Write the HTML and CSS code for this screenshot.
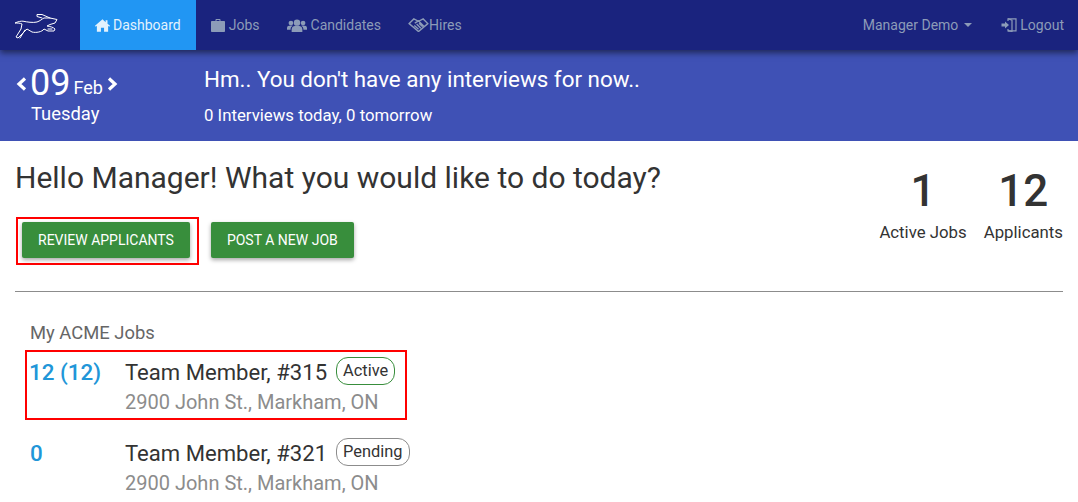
FILE: index.html
```html
<!DOCTYPE html>
<html lang="en">
<head>
<meta charset="utf-8">
<title>Dashboard</title>
<link rel="stylesheet" href="styles.css">
</head>
<body>
<nav class="nav">
  <a class="brand" href="#">
    <svg class="logo" viewBox="0 0 44 26" width="44" height="26" fill="none" stroke="#fff" stroke-width="1" stroke-linejoin="round" stroke-linecap="round">
      <path d="M0 10C3 8.500 6 8 8 8.200C12 9 18 10 22 9C25 8 27 6 29 5L35 5L42 6.500L40 10L35 11.500L32 13C35 13.500 38 14 40 16L39 18L33 18L29 16C27 19 21 20 17 19L12 16L9 19L3 25L1 24L6 16L7 11C5 10 3 10 0 10Z"/>
      <path d="M10 17L5 25"/>
      <path d="M35 5L27 1.500L22 1.500L22 3.500L27 5"/>
      <path d="M33 16L37 16"/>
    </svg>
  </a>
  <ul class="menu">
    <li><a class="item active" href="#">
      <svg class="ico ico-home" viewBox="0 0 24 20" width="15" height="13"><path d="M12 0L0 10.500l1.200 1.300L3 10.300V20h6.500v-6.500h5V20H21v-9.700l1.800 1.500 1.200-1.300-4-3.500V1.500h-3v3.200z" fill="currentColor"/></svg>Dashboard</a></li>
    <li><a class="item" href="#">
      <svg class="ico ico-gap" viewBox="0 0 28 26" width="14" height="13"><path d="M9 4V1.500C9 .7 9.700 0 10.500 0h7C18.300 0 19 .7 19 1.500V4h7c1.100 0 2 .9 2 2v18c0 1.100-.9 2-2 2H2c-1.100 0-2-.9-2-2V6c0-1.100.9-2 2-2zm2 0h6V2h-6z" fill="currentColor"/></svg>Jobs</a></li>
    <li><a class="item" href="#">
      <svg class="ico ico-users" viewBox="0 0 28 18" width="20" height="13"><g fill="currentColor"><circle cx="14" cy="5" r="4.500"/><path d="M6.500 18v-3.500C6.500 11 9 9.500 14 9.500s7.500 1.500 7.500 5V18z"/><circle cx="5.500" cy="5.500" r="3.300"/><path d="M0 15v-2.500C0 10 2 9 5.500 9c1 0 1.800.1 2.500.3-2 1-3 2.800-3 5.200v.5z"/><circle cx="22.500" cy="5.500" r="3.300"/><path d="M28 15v-2.500C28 10 26 9 22.500 9c-1 0-1.800.1-2.500.3 2 1 3 2.800 3 5.200v.5z"/></g></svg>Candidates</a></li>
    <li><a class="item" href="#">
      <svg class="ico ico-hands" viewBox="0 0 22 15" width="21" height="14" fill="none" stroke="currentColor" stroke-width="1.500"><path d="M1 6L6 1l5 2.500L16 1l5 5-10 8.500z"/><path d="M7 5.500l4-2.500 6 6M6.500 8l4.500 4M9 6.500l4.500 4.500M11.500 5.500l4 4"/></svg>Hires</a></li>
  </ul>
  <ul class="menu menu-right">
    <li><a class="item" href="#">Manager Demo<span class="caret"></span></a></li>
    <li><a class="item item-logout" href="#">
      <svg class="ico ico-logout" viewBox="0 0 16 14" width="16" height="14" fill="none" stroke="currentColor" stroke-width="1.200"><path d="M7 3V.8h8v12H7V11"/><path d="M7 .8l4 1.400v11.200l-4-.6" /><path d="M.5 5.500h3.500V3.500L8 7l-4 3.500v-2H.5z" fill="currentColor" stroke="none"/></svg>Logout</a></li>
  </ul>
</nav>

<header class="banner">
  <div class="date">
    <div class="date-row">
      <svg class="chev" viewBox="0 0 11 14" width="11" height="14"><path d="M9 1.500L3 7l6 5.500" fill="none" stroke="#fff" stroke-width="3.200"/></svg>
      <span class="day">09</span><span class="month">Feb</span>
      <svg class="chev" viewBox="0 0 11 14" width="11" height="14"><path d="M2 1.500L8 7l-6 5.500" fill="none" stroke="#fff" stroke-width="3.200"/></svg>
    </div>
    <div class="weekday">Tuesday</div>
  </div>
  <div class="summary">
    <h2 class="summary-title">Hm.. You don't have any interviews for now..</h2>
    <p class="summary-sub">0 Interviews today, 0 tomorrow</p>
  </div>
</header>

<main class="content">
  <section class="top">
    <div class="welcome">
      <h1 class="hello">Hello Manager! What you would like to do today?</h1>
      <div class="actions">
        <div class="outline"><a class="btn" href="#">REVIEW APPLICANTS</a></div>
        <a class="btn btn-plain" href="#">POST A NEW JOB</a>
      </div>
    </div>
    <div class="stats">
      <div class="stat"><div class="stat-num">1</div><div class="stat-label">Active Jobs</div></div>
      <div class="stat"><div class="stat-num">12</div><div class="stat-label">Applicants</div></div>
    </div>
  </section>
  <hr class="rule">
  <section class="jobs">
    <h3 class="jobs-title">My ACME Jobs</h3>
    <div class="job job-marked">
      <div class="job-count">12 (12)</div>
      <div class="job-info">
        <div class="job-name">Team Member, #315<span class="tag tag-active">Active</span></div>
        <div class="job-addr">2900 John St., Markham, ON</div>
      </div>
    </div>
    <div class="job">
      <div class="job-count">0</div>
      <div class="job-info">
        <div class="job-name">Team Member, #321<span class="tag tag-pending">Pending</span></div>
        <div class="job-addr">2900 John St., Markham, ON</div>
      </div>
    </div>
  </section>
</main>
</body>
</html>
```

FILE: styles.css
```css
* { box-sizing: border-box; }
html, body { height: 100%; }
body {
  margin: 0;
  overflow: hidden;
  background: #fff;
  color: #333;
  font-family: Roboto, "Liberation Sans", sans-serif;
}
a { text-decoration: none; color: inherit; }
ul { list-style: none; margin: 0; padding: 0; }

.nav {
  position: relative;
  z-index: 2;
  display: flex;
  height: 50px;
  padding-left: 15px;
  background: #1a237e;
  box-shadow: 0 3px 6px rgba(0, 0, 0, .5);
}
.brand { display: flex; align-items: center; width: 65px; }
.logo { display: block; margin-top: 2px; }
.menu { display: flex; }
.menu-right { margin-left: auto; }
.item {
  display: flex;
  align-items: center;
  height: 50px;
  padding: 0 15px;
  font-size: 14px;
  color: #8c9bb8;
}
.item.active { background: #2196f3; color: #e3f2fd; }
.item-logout { padding: 0 14px; }
.ico { flex: none; }
.ico-home { margin-right: 3px; }
.ico-gap { margin-right: 4px; }
.ico-users { margin: 0 4px 0 -3px; }
.ico-hands { margin: 0 0 0 -3px; }
.ico-logout { margin-right: 3px; }
.caret {
  margin-left: 6px;
  border-top: 4px solid currentColor;
  border-left: 4px solid transparent;
  border-right: 4px solid transparent;
}

.banner {
  display: flex;
  height: 91px;
  padding-left: 16px;
  background: #3f51b5;
  color: #fff;
}
.date { width: 188px; padding-top: 15px; }
.date-row { display: flex; align-items: center; height: 37px; }
.day { font-size: 36px; line-height: 37px; margin-left: 3px; font-weight: 400; }
.month { font-size: 18px; margin: 8px 4px 0 3px; }
.weekday { font-size: 18.400px; line-height: 24px; margin: 0 0 0 15px; }
.summary { padding-top: 16px; }
.summary-title { margin: 0; font-size: 22.400px; line-height: 27px; font-weight: 400; }
.summary-sub { margin: 11px 0 0; font-size: 16.800px; line-height: 22px; }

.content { padding: 0 15px; }
.top { display: flex; justify-content: space-between; }
.hello { margin: 21px 0 0; font-size: 30px; line-height: 32px; font-weight: 400; color: #333; }
.actions { display: flex; align-items: flex-start; gap: 12px; margin-top: 23px; margin-left: 1px; }
.outline { padding: 3px 7px 5px 4px; border: 2px solid #f00; }
.btn {
  display: block;
  height: 36px;
  padding: 0 16px;
  border-radius: 2px;
  background: #388e3c;
  color: #fff;
  font-size: 14px;
  line-height: 36px;
  box-shadow: 0 2px 4px rgba(0, 0, 0, .35);
}
.btn-plain { margin-top: 5px; }
.stats { display: flex; gap: 17px; padding-top: 25px; text-align: center; }
.stat-num { font-size: 44px; line-height: 50px; font-weight: 500; color: #333; }
.stat-label { margin-top: 5px; font-size: 16.800px; line-height: 22px; color: #333; }

.rule { margin: 26px 0 0; border: 0; border-top: 1px solid #8c8c8c; }

.jobs-title { margin: 31px 0 0 15px; font-size: 18.400px; line-height: 20px; font-weight: 400; color: #666; }
.job { display: flex; padding: 6px 0 0 15px; }
.job-marked {
  width: 382px;
  height: 70px;
  margin: 7px 0 0 10px;
  padding: 5px 0 0 2px;
  border: 2px solid #f00;
}
.job + .job { margin-top: 12px; }
.job-count { width: 95px; font-size: 22.400px; line-height: 30px; font-weight: 500; color: #2196d8; }
.job-marked .job-count { width: 96px; }
.job-info { min-width: 0; }
.job-name { display: flex; align-items: flex-start; font-size: 22.100px; line-height: 30px; color: #333; white-space: nowrap; }
.job-addr { margin-top: 2px; font-size: 20px; line-height: 26px; color: #8c8c8c; }
.tag {
  margin: 0 0 0 9px;
  height: 28px;
  padding: 0 6px;
  border: 1px solid;
  border-radius: 12px;
  font-size: 16.400px;
  line-height: 25px;
  color: #333;
}
.tag-active { border-color: #388e3c; }
.tag-pending { border-color: #8c8c8c; }
```
